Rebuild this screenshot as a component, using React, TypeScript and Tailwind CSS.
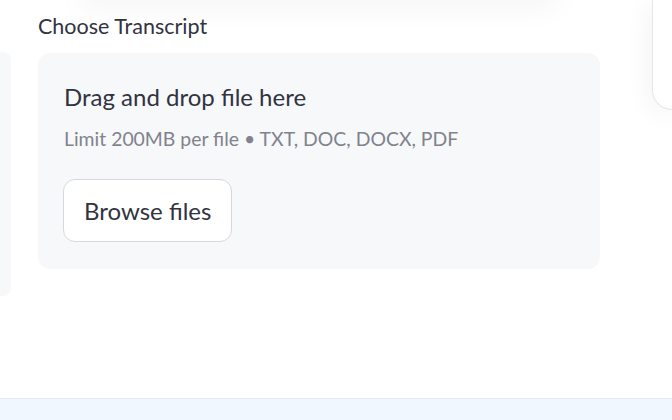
// App.tsx
const font = { fontFamily: '"Lato", "Open Sans", sans-serif' };

function Uploader() {
  return (
    <div className="rounded-xl bg-[#f7f8fa] px-[26px] pt-[28px] pb-[27px]">
      <p className="text-[24px] leading-[32px] text-[#31333f]">Drag and drop file here</p>
      <p className="mt-[12px] text-[19.4px] leading-[28px] text-[#80838c]">
        Limit 200MB per file • TXT, DOC, DOCX, PDF
      </p>
      <button className="mt-[26px] -ml-px h-[63px] rounded-xl border border-[#d6d8dc] bg-white px-[20px] text-[24px] text-[#31333f]">
        Browse files
      </button>
    </div>
  );
}

export default function App() {
  return (
    <div className="flex h-[420px] w-[672px] flex-col overflow-hidden bg-white" style={font}>
      <div className="flex flex-1 items-start">
        <div className="mt-[52px] h-[244px] w-[11px] rounded-r-lg bg-[#f7f8fa]" />
        <div className="ml-[27px] w-[562px]">
          <div className="mx-[40px] -mt-4 h-4 rounded-xl shadow-[0_6px_28px_rgba(0,0,0,0.06)]" />
          <p className="mt-[12px] mb-[13px] text-[21.5px] leading-[28px] text-[#31333f]">Choose Transcript</p>
          <Uploader />
        </div>
        <div className="ml-auto h-[110px] w-[20px] rounded-bl-[22px] border-b border-l border-[#e6e7ea] bg-white shadow-[0_4px_28px_rgba(0,0,0,0.07)]" />
      </div>
      <div className="h-[22px] border-t border-[#e1e9f2] bg-[#f0f7fe]" />
    </div>
  );
}
